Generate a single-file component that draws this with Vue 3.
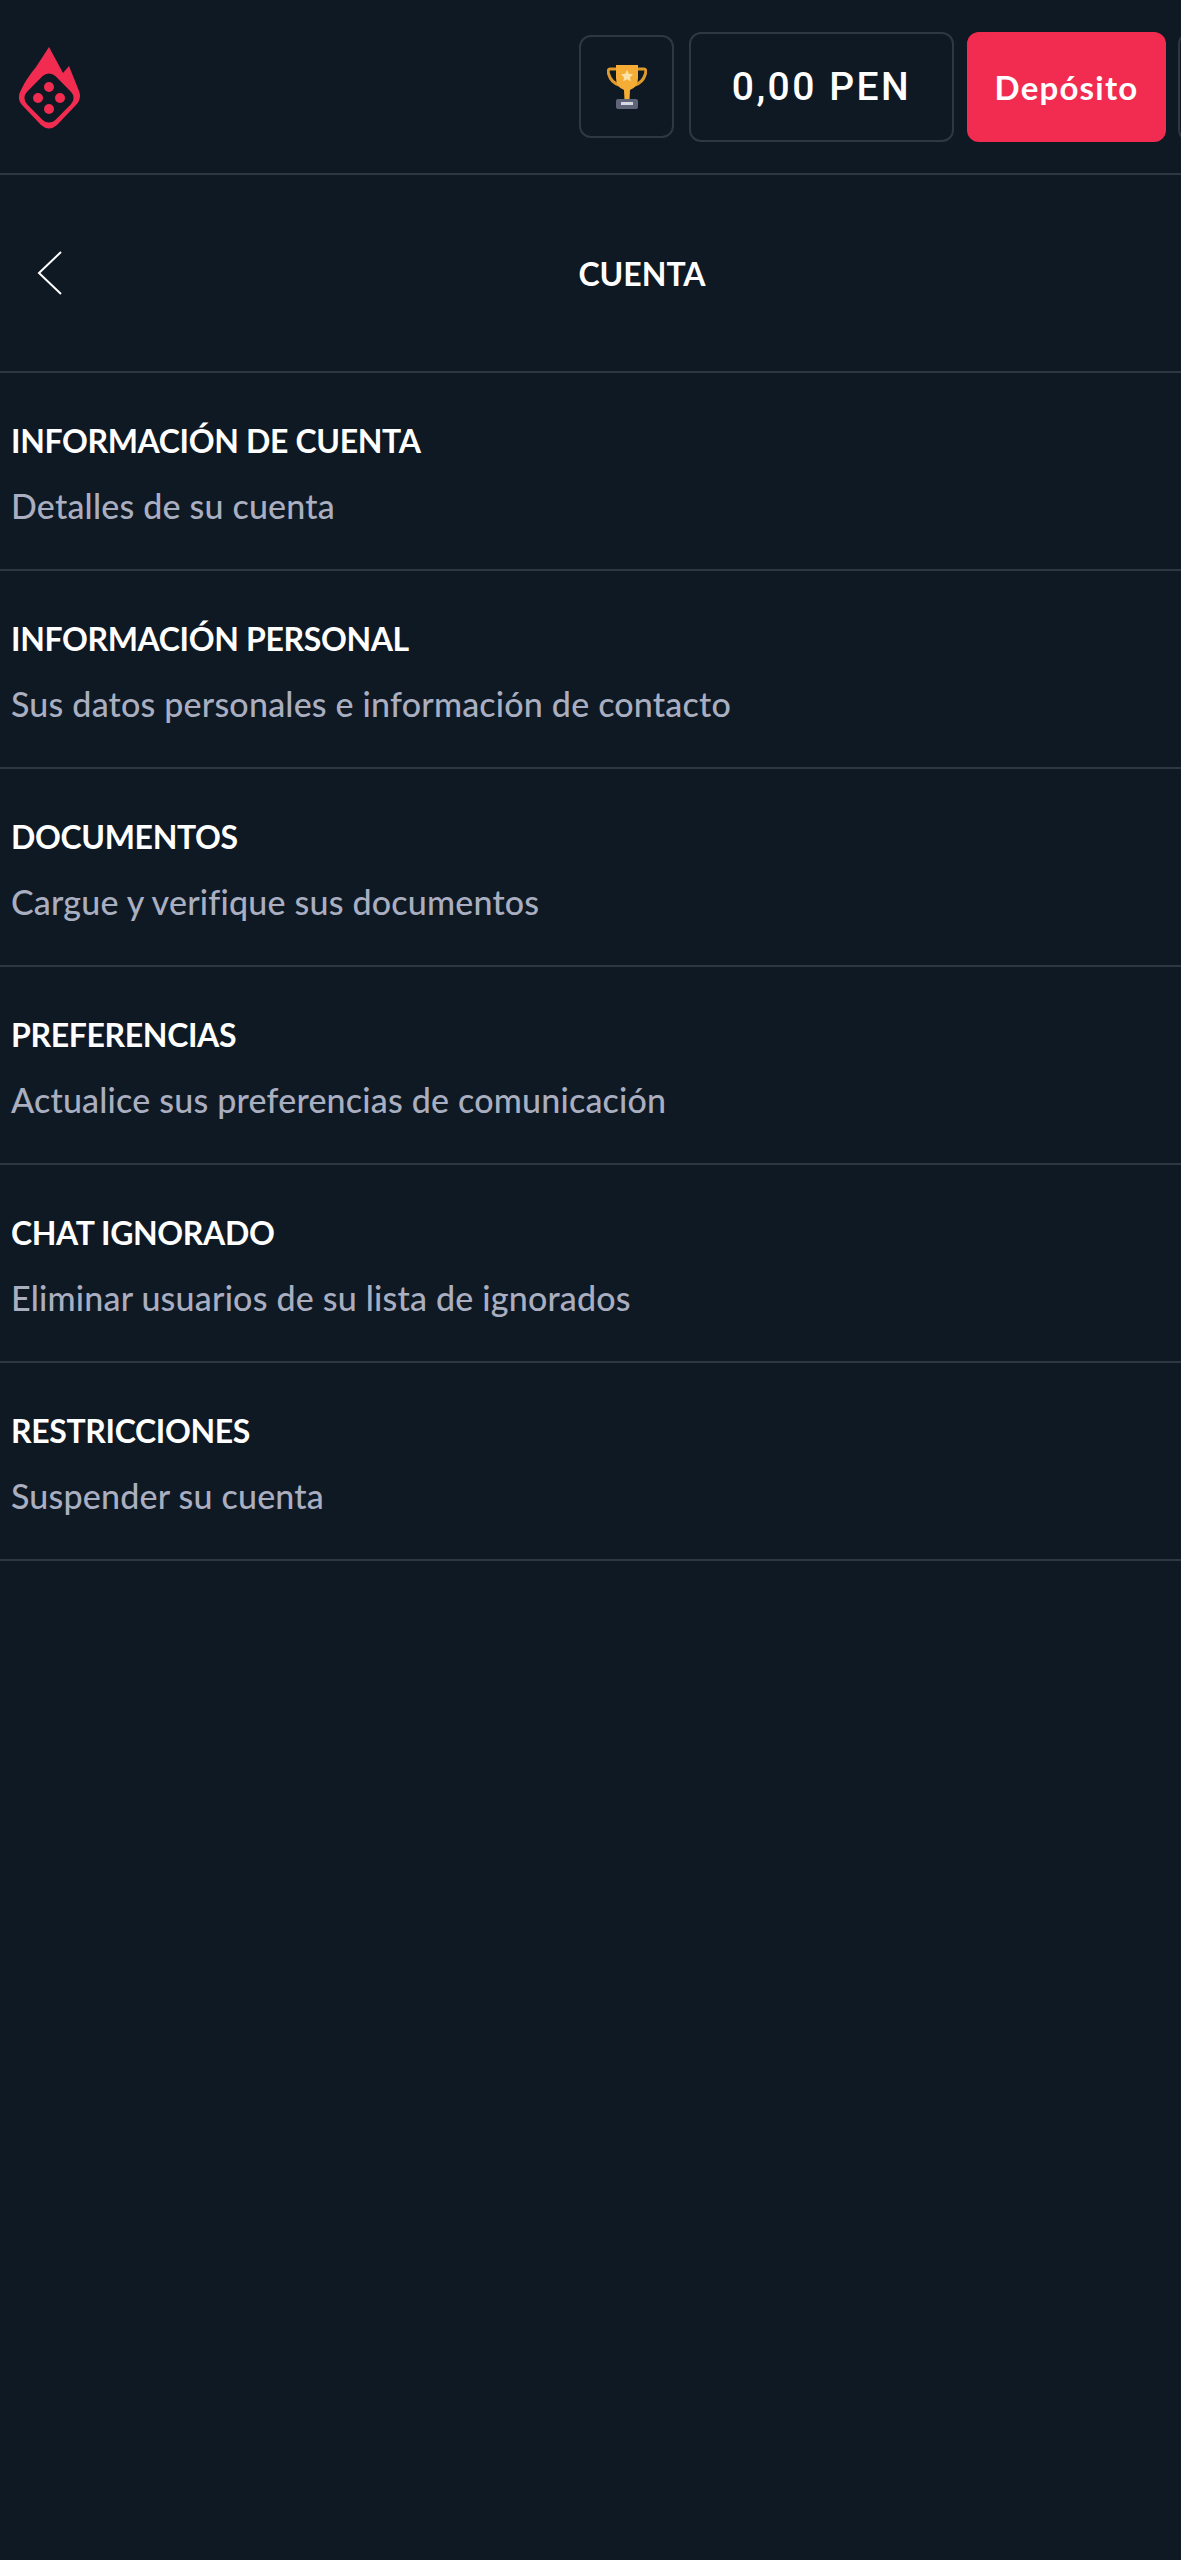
<script setup>
const rows = [
  { title: "INFORMACIÓN DE CUENTA", text: "Detalles de su cuenta" },
  { title: "INFORMACIÓN PERSONAL", text: "Sus datos personales e información de contacto" },
  { title: "DOCUMENTOS", text: "Cargue y verifique sus documentos" },
  { title: "PREFERENCIAS", text: "Actualice sus preferencias de comunicación" },
  { title: "CHAT IGNORADO", text: "Eliminar usuarios de su lista de ignorados" },
  { title: "RESTRICCIONES", text: "Suspender su cuenta" },
];
</script>

<template>
  <div class="page">
    <header class="topbar">
      <svg class="logo" viewBox="0 0 63 82" width="63" height="82">
        <path
          d="M31 0 L45 26 L51 19 L61 44 Q64 52 58 58 L39 78 Q31 85 23 78 L5 59 Q-2 52 3 43 Q8 32 18 20 Z"
          fill="#f22c50"
        />
        <rect x="11" y="31" width="40" height="40" rx="9" transform="rotate(45 31 51)" fill="#0f1923" />
        <circle cx="31" cy="40" r="5" fill="#f22c50" />
        <circle cx="20" cy="51" r="5" fill="#f22c50" />
        <circle cx="42" cy="51" r="5" fill="#f22c50" />
        <circle cx="31" cy="62" r="5" fill="#f22c50" />
      </svg>
      <div class="actions">
        <button class="trophy">
          <svg viewBox="0 0 40 46" width="40" height="46">
            <path d="M10 5 H3 Q0 5 2 11 Q4 18 12 21" fill="none" stroke="#e09a2b" stroke-width="3" />
            <path d="M30 5 H37 Q40 5 38 11 Q36 18 28 21" fill="none" stroke="#e09a2b" stroke-width="3" />
            <path d="M9 1 H31 V14 Q31 23 23 26 L22.500 36 H17.500 L17 26 Q9 23 9 14 Z" fill="#f6ad35" />
            <path d="M20 6 L21.800 9.800 L26 10.300 L23 13.200 L23.700 17.300 L20 15.300 L16.300 17.300 L17 13.200 L14 10.300 L18.200 9.800 Z" fill="#fde3a8" />
            <rect x="9" y="35" width="22" height="10" rx="2" fill="#5f6478" />
            <rect x="14" y="38" width="12" height="3" fill="#d5d8e2" />
          </svg>
        </button>
        <div class="balance">0,00 PEN</div>
        <button class="deposit">Depósito</button>
        <div class="cut-off"></div>
      </div>
    </header>

    <nav class="subnav">
      <button class="back">
        <svg viewBox="0 0 28 46" width="28" height="46">
          <path d="M25 2 L3 23 L25 44" fill="none" stroke="#fff" stroke-width="2" />
        </svg>
      </button>
      <h1 class="heading">CUENTA</h1>
    </nav>

    <ul class="list">
      <li v-for="row in rows" :key="row.title" class="row">
        <div class="row-title">{{ row.title }}</div>
        <div class="row-text">{{ row.text }}</div>
      </li>
    </ul>
  </div>
</template>

<style scoped>
.page {
  min-height: 2560px;
  background: #0f1923;
  font-family: Lato, "Noto Sans", sans-serif;
  color: #fff;
  overflow: hidden;
}
.topbar {
  box-sizing: border-box;
  height: 175px;
  display: flex;
  align-items: center;
  justify-content: space-between;
  padding-left: 18px;
  border-bottom: 2px solid #2f3842;
}
.logo {
  margin-top: 2px;
  display: block;
}
.actions {
  display: flex;
  align-items: center;
  margin-right: -12px;
}
.trophy {
  box-sizing: border-box;
  width: 95px;
  height: 103px;
  display: flex;
  align-items: center;
  justify-content: center;
  background: none;
  border: 2px solid #2f3842;
  border-radius: 12px;
  padding: 0;
  margin-right: 15px;
}
.balance {
  box-sizing: border-box;
  width: 265px;
  height: 110px;
  display: flex;
  align-items: center;
  justify-content: center;
  border: 2px solid #2f3842;
  border-radius: 12px;
  font-family: Roboto, sans-serif;
  font-size: 39px;
  font-weight: 500;
  letter-spacing: 2.5px;
  margin-right: 13px;
}
.deposit {
  box-sizing: border-box;
  width: 199px;
  height: 110px;
  background: #f22c50;
  border: none;
  border-radius: 12px;
  color: #fff;
  font-family: Lato, sans-serif;
  font-size: 33px;
  font-weight: 700;
  letter-spacing: 1.2px;
  margin-right: 12px;
}
.cut-off {
  box-sizing: border-box;
  width: 15px;
  height: 110px;
  border: 2px solid #2f3842;
  border-right: none;
  border-radius: 12px 0 0 12px;
}
.subnav {
  box-sizing: border-box;
  height: 198px;
  display: flex;
  align-items: center;
  border-bottom: 2px solid #2f3842;
}
.back {
  box-sizing: border-box;
  width: 103px;
  padding: 0 0 0 36px;
  background: none;
  border: none;
  display: flex;
}
.heading {
  flex: 1;
  margin: 0;
  text-align: center;
  font-size: 32px;
  font-weight: 700;
}
.list {
  list-style: none;
  margin: 0;
  padding: 0;
}
.row {
  box-sizing: border-box;
  height: 198px;
  padding: 48px 11px 0;
  border-bottom: 2px solid #2f3842;
}
.row-title {
  font-size: 32px;
  font-weight: 700;
  letter-spacing: -0.35px;
  line-height: 40px;
}
.row-text {
  margin-top: 25px;
  font-size: 34px;
  font-weight: 500;
  letter-spacing: 0.2px;
  line-height: 40px;
  color: #a9aec0;
}
</style>
